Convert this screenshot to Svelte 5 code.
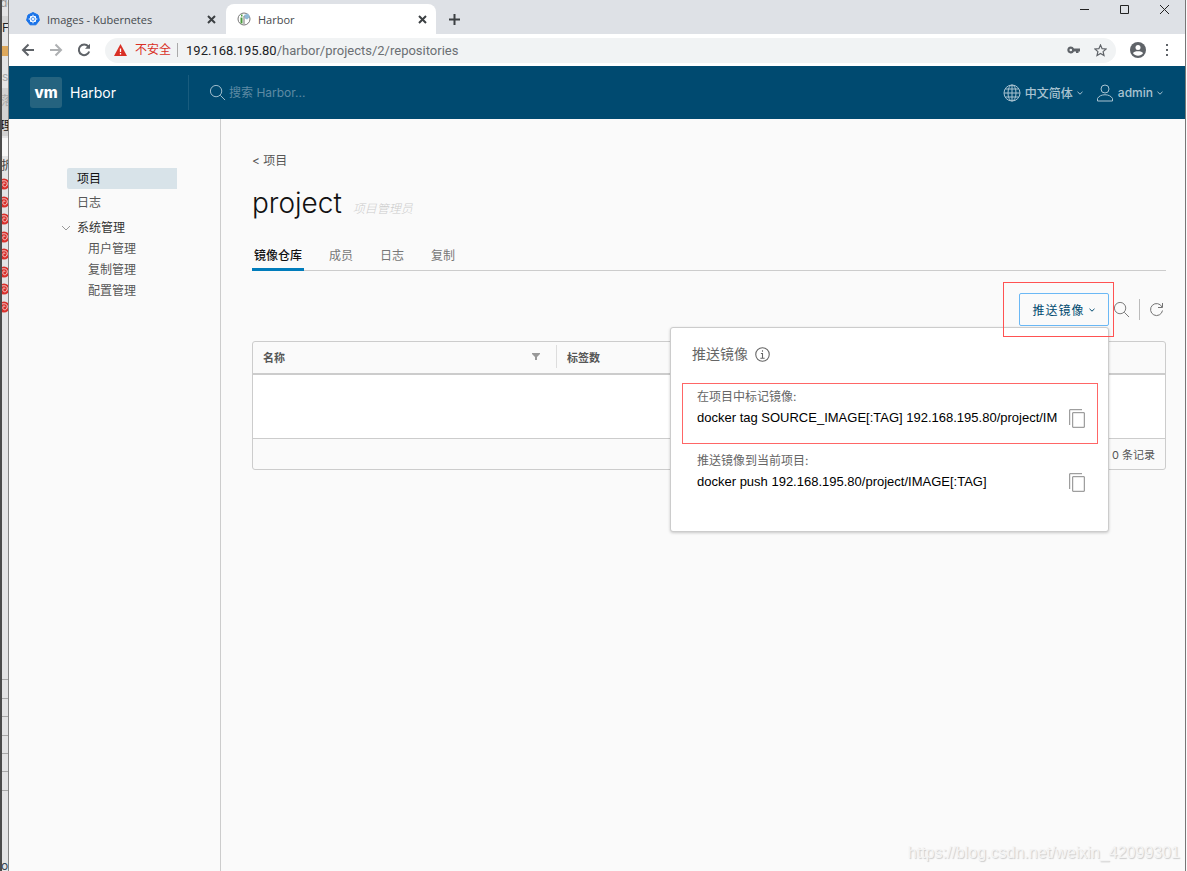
<script>
	let keyword = $state("");
	let showPush = $state(true);

	const registry = "192.168.195.80";
	const projectTabs = ["镜像仓库", "成员", "日志", "复制"];
	const systemLinks = ["用户管理", "复制管理", "配置管理"];
	const commands = [
		{
			id: "tag",
			label: "在项目中标记镜像:",
			text: `docker tag SOURCE_IMAGE[:TAG] ${registry}/project/IMAGE[:TAG]`,
			marked: true
		},
		{
			id: "push",
			label: "推送镜像到当前项目:",
			text: `docker push ${registry}/project/IMAGE[:TAG]`,
			marked: false
		}
	];
	const swirls = [184, 202, 219, 237, 254, 272, 289, 307];
	const rowLines = [679, 698, 716, 735, 753, 771, 790];

	function copy(text) {
		navigator.clipboard?.writeText(text);
	}
</script>

{#snippet caret()}
	<svg class="caret" width="8" height="8" viewBox="0 0 8 8"><path d="M1.5 2.8 4 5.2l2.5-2.4" /></svg>
{/snippet}

{#snippet search(size)}
	<svg class="line" width={size} height={size} viewBox="0 0 18 18"><circle cx="7.5" cy="7.5" r="6" /><path d="m12 12 5 5" /></svg>
{/snippet}

<div class="desktop">
	<!-- edge of the window behind the browser -->
	<svg class="behind" width="9" aria-hidden="true">
		<rect width="9" height="100%" fill="#e4e4e5" />
		<rect x="2" y="16" width="6" height="8" fill="#d3d3d3" />
		<rect x="2" y="46" width="6" height="10" fill="#dda85c" />
		<rect x="2" y="88" width="6" height="48" fill="#d2d2d2" />
		<rect x="2" y="138" width="6" height="18" fill="#f8f8f8" />
		<text x="0" y="7" fill="#999">de</text>
		<text x="2" y="32" fill="#222">F/</text>
		<text x="2" y="81" fill="#aaa">s</text>
		<text x="1" y="105" fill="#aaa">落</text>
		<text x="0" y="130" fill="#111">理</text>
		<text x="1" y="170" fill="#444">折</text>
		{#each swirls as y}
			<circle cx="4" cy={y} r="5.5" fill="#d9302b" />
			<path d="M2 {y - 3}c4-1 6 1 5 4s-5 2-4-1 2 0 2 0" fill="none" stroke="#f6d5d4" />
		{/each}
		{#each rowLines as y}
			<rect x="2" {y} width="6" height="1" fill="#a9a9a9" />
		{/each}
		<text x="1" y="870" fill="#345">of</text>
		<rect width="2" height="100%" fill="#4b4b4b" />
		<rect x="8" width="1" height="100%" fill="#858585" />
	</svg>

	<div class="window">
		<div class="tabstrip">
			<div class="tab">
				<svg width="14" height="14" viewBox="0 0 14 14">
					<path d="M7 .5 12 3l1.4 5.2-3.5 4.6H4.100L.6 8.200 2 3z" fill="#1a73e8" stroke="#1a73e8" stroke-linejoin="round" />
					<circle cx="7" cy="7" r="3" fill="none" stroke="#fff" />
					<path d="M7 2.500v9M2.500 7h9M4 4l6 6M10 4l-6 6" stroke="#fff" stroke-width=".7" />
				</svg>
				<span>Images - Kubernetes</span>
				<button aria-label="关闭标签页"><svg width="9" height="9" viewBox="0 0 9 9"><path d="m1 1 7 7m0-7-7 7" /></svg></button>
			</div>
			<div class="tab active">
				<svg width="14" height="14" viewBox="0 0 14 14">
					<circle cx="7" cy="7" r="6" fill="#fff" stroke="#777" />
					<path d="M3.500 5.500h2v6h-2zM4 2.500h1.500v2H4z" fill="#4b9a3e" />
					<path d="m7 3 4-1.500L13 5l-3 2.500-2-1z" fill="#8fb9d6" />
					<path d="M7 4v8" stroke="#777" />
				</svg>
				<span>Harbor</span>
				<button aria-label="关闭标签页"><svg width="9" height="9" viewBox="0 0 9 9"><path d="m1 1 7 7m0-7-7 7" /></svg></button>
			</div>
			<button class="newtab" aria-label="新标签页"><svg width="11" height="11" viewBox="0 0 11 11"><path d="M5.500 0v11M0 5.500h11" /></svg></button>
			<div class="controls">
				<button aria-label="最小化"><svg width="9" height="9" viewBox="0 0 9 9"><path d="M0 4.500h9" /></svg></button>
				<button aria-label="最大化"><svg width="9" height="9" viewBox="0 0 9 9"><path d="M.5.5h8v8h-8z" /></svg></button>
				<button aria-label="关闭"><svg width="9" height="9" viewBox="0 0 9 9"><path d="m0 0 9 9m0-9-9 9" /></svg></button>
			</div>
		</div>

		<div class="toolbar">
			<button aria-label="后退"><svg width="14" height="14" viewBox="0 0 14 14"><path d="M13 7H2m5.500-5.500L2 7l5.500 5.500" /></svg></button>
			<button class="off" aria-label="前进"><svg width="14" height="14" viewBox="0 0 14 14"><path d="M1 7h11M6.500 1.500 12 7l-5.500 5.500" /></svg></button>
			<button aria-label="重新加载"><svg width="14" height="14" viewBox="0 0 14 14"><path d="M11.300 3.500A5.300 5.300 0 1 0 12.200 8.500" /><path d="M13 .8v5H8z" fill="#5f6368" stroke="none" /></svg></button>
			<div class="address">
				<svg width="13" height="12" viewBox="0 0 13 12"><path d="M6.500 0 13 12H0z" fill="#d93025" /><path d="M6.500 4.500v3.500m0 1v1.500" stroke="#fff" stroke-width="1.300" /></svg>
				<span class="insecure">不安全</span>
				<span class="url">{registry}<i>/harbor/projects/2/repositories</i></span>
				<svg width="13" height="8" viewBox="0 0 13 8"><path d="M3.800.5a3.500 3.500 0 1 0 3.200 5h2V7h2.500V5.500H13v-3H7a3.500 3.500 0 0 0-3.200-2zm0 2.200a1.300 1.300 0 1 1 0 2.600 1.300 1.300 0 0 1 0-2.600z" fill="#5f6368" fill-rule="evenodd" /></svg>
				<svg class="star" width="13" height="13" viewBox="0 0 13 13"><path d="m6.500 1 1.600 3.700 4 .3-3 2.600.9 4-3.500-2.100L3 11.600l.9-4L.9 5l4-.3z" fill="none" stroke="#5f6368" stroke-width="1.200" /></svg>
			</div>
			<button aria-label="用户"><svg width="16" height="16" viewBox="0 0 16 16"><circle cx="8" cy="8" r="8" fill="#5f6368" stroke="none" /><circle cx="8" cy="5.500" r="2.500" fill="#fff" stroke="none" /><path d="M3 11.200c1-2.600 9-2.600 10 0-2 3.300-8 3.300-10 0z" fill="#fff" stroke="none" /></svg></button>
			<button class="more" aria-label="菜单"><svg width="4" height="14" viewBox="0 0 4 14"><path d="M1 1h2v2H1zM1 6h2v2H1zM1 11h2v2H1z" fill="#5f6368" stroke="none" /></svg></button>
		</div>

		<header>
			<a class="brand" href="#home"><span class="logo">vm</span>Harbor</a>
			<label class="find">
				{@render search(17)}
				<input bind:value={keyword} placeholder="搜索 Harbor..." aria-label="搜索 Harbor" />
			</label>
			<button class="menu">
				<svg class="line" width="18" height="18" viewBox="0 0 18 18"><circle cx="9" cy="9" r="8" /><ellipse cx="9" cy="9" rx="4" ry="8" /><path d="M9 1v16M1 9h16M2.300 5h13.400M2.300 13h13.400" /></svg>
				中文简体{@render caret()}
			</button>
			<button class="menu">
				<svg class="line" width="18" height="18" viewBox="0 0 18 18"><circle cx="9" cy="5" r="4" /><path d="M1.500 17v-2.500c2.500-5 12.500-5 15 0V17z" /></svg>
				admin{@render caret()}
			</button>
		</header>

		<div class="body">
			<nav class="side">
				<a class="current" href="#projects">项目</a>
				<a href="#logs">日志</a>
				<div class="group">
					<button><svg width="8" height="8" viewBox="0 0 8 8"><path d="m0 2 4 4 4-4" /></svg>系统管理</button>
					{#each systemLinks as name}
						<a href="#system">{name}</a>
					{/each}
				</div>
			</nav>

			<main>
				<a class="back" href="#projects">&lt; 项目</a>
				<h1>project <em>项目管理员</em></h1>
				<div class="tabs" role="tablist">
					{#each projectTabs as name, i}
						<button role="tab" aria-selected={i === 0} class:selected={i === 0}>{name}</button>
					{/each}
				</div>

				<div class="actions">
					<div class="dropdown">
						<button class="push" onclick={() => (showPush = !showPush)}>推送镜像{@render caret()}</button>
						{#if showPush}
							<section class="panel">
								<h2>
									推送镜像
									<svg class="line" width="15" height="15" viewBox="0 0 14 14"><circle cx="7" cy="7" r="6.300" /><path d="M7 3v1.500M5.500 6H7v4.500M5 10.500h4" /></svg>
								</h2>
								{#each commands as command (command.id)}
									<div class="command" class:framed={command.marked}>
										<label for={command.id}>{command.label}</label>
										<input id={command.id} readonly value={command.text} />
										<button aria-label="复制" onclick={() => copy(command.text)}>
											<svg width="16" height="19" viewBox="0 0 16 19"><path d="M.7 16V.7H13" /><path d="M3.700 3.700h11.600v14.600H3.700z" /></svg>
										</button>
									</div>
								{/each}
							</section>
						{/if}
						<div class="marker"></div>
					</div>
					<button class="icon" aria-label="搜索">{@render search(17)}</button>
					<button class="icon refresh" aria-label="刷新"><svg class="line" width="15" height="15" viewBox="0 0 15 15"><path d="M13 5A6 6 0 1 0 13.500 8.500M13.500 1v4.500H9" /></svg></button>
				</div>

				<table>
					<thead>
						<tr>
							<th class="name"><div>名称<svg width="8" height="7" viewBox="0 0 8 7"><path d="M0 0h8v1L5 4v3H3V4L0 1z" fill="#999" /></svg></div></th>
							<th><div>标签数</div></th>
						</tr>
					</thead>
					<tbody>
						<tr><td colspan="2"></td></tr>
					</tbody>
					<tfoot>
						<tr><td colspan="2">0 条记录</td></tr>
					</tfoot>
				</table>
			</main>
		</div>
	</div>
	<div class="watermark">https://blog.csdn.net/weixin_42099301</div>
</div>

<style>
	:global(body) {
		margin: 0;
		background: #fafafa;
	}
	.desktop {
		position: relative;
		display: flex;
		min-height: 100vh;
		overflow: hidden;
		font-family: Inter, "Noto Sans CJK SC", sans-serif;
		font-size: 12px;
		color: #565656;
	}
	.behind {
		flex: none;
		align-self: stretch;
		height: auto;
		font-size: 12px;
	}
	.window {
		flex: 1;
		min-width: 0;
		display: flex;
		flex-direction: column;
		border-right: 1px solid #777;
		margin-right: 1px;
		background: #fafafa;
	}
	button,
	input {
		font: inherit;
		color: inherit;
		border: 0;
		padding: 0;
		background: none;
	}
	button {
		display: flex;
		align-items: center;
		justify-content: center;
	}
	a {
		color: inherit;
		text-decoration: none;
	}
	svg {
		flex: none;
	}
	.line,
	.caret {
		fill: none;
		stroke: currentColor;
	}

	.tabstrip {
		display: flex;
		height: 34px;
		background: #dee1e6;
		font-family: "Open Sans", sans-serif;
		font-size: 11px;
		color: #45494d;
	}
	.tabstrip button svg {
		fill: none;
		stroke: #3c4043;
		stroke-width: 2;
	}
	.tab {
		display: flex;
		align-items: center;
		gap: 7px;
		box-sizing: border-box;
		width: 210px;
		margin: 4px 0 0 6px;
		padding: 0 9px 0 11px;
		border-radius: 8px 8px 0 0;
	}
	.tab span {
		flex: 1;
	}
	.tab.active {
		margin-left: 1px;
		background: #fff;
	}
	.newtab {
		margin: 4px 0 0 13px;
	}
	.controls {
		display: flex;
		gap: 31px;
		height: 19px;
		margin-left: auto;
		padding-right: 16px;
	}
	.controls button svg {
		stroke: #222;
		stroke-width: 1;
	}

	.toolbar {
		display: flex;
		align-items: center;
		gap: 14px;
		height: 32px;
		padding: 0 16px 0 12px;
		background: #fff;
		font-family: Roboto, "Noto Sans CJK SC", sans-serif;
	}
	.toolbar button svg {
		fill: none;
		stroke: #5f6368;
		stroke-width: 2;
	}
	.toolbar .off {
		opacity: 0.5;
	}
	.toolbar .more {
		margin-left: 5px;
	}
	.address {
		flex: 1;
		display: flex;
		align-items: center;
		gap: 8px;
		height: 25px;
		padding: 0 9px;
		border-radius: 13px;
		background: #f1f3f4;
	}
	.insecure {
		padding-right: 6px;
		border-right: 1px solid #aaa;
		line-height: 14px;
		color: #d93025;
	}
	.url {
		flex: 1;
		font-size: 13px;
		color: #202124;
	}
	.url i {
		font-style: normal;
		color: #6b6f73;
	}
	.star {
		margin-left: 6px;
	}

	header {
		display: flex;
		align-items: center;
		height: 53px;
		padding-right: 21px;
		background: #004a70;
		color: #a9c3d1;
	}
	.brand {
		display: flex;
		align-items: center;
		gap: 8px;
		box-sizing: border-box;
		width: 180px;
		height: 35px;
		padding-left: 21px;
		border-right: 1px solid #195c7e;
		font-size: 14px;
		color: #fff;
	}
	.logo {
		width: 32px;
		border-radius: 3px;
		background: #25637f;
		line-height: 31px;
		text-align: center;
		font-size: 15px;
		font-weight: 800;
	}
	.find {
		flex: 1;
		display: flex;
		align-items: center;
		gap: 3px;
		padding-left: 20px;
	}
	.find input {
		width: 160px;
	}
	.find input::placeholder {
		color: #5e8ba4;
		opacity: 1;
	}
	.menu {
		gap: 4px;
		margin-left: 12px;
		font-weight: 500;
	}
	.menu .caret {
		margin-left: -1px;
	}

	.body {
		flex: 1;
		display: flex;
	}
	.side {
		display: flex;
		flex-direction: column;
		gap: 3px;
		box-sizing: border-box;
		width: 212px;
		padding: 49px 43px 0 58px;
		border-right: 1px solid #ccc;
		line-height: 21px;
	}
	.side > a {
		padding-left: 10px;
	}
	.side .current {
		border-radius: 2px 0 0 2px;
		background: #d8e3e9;
		color: #111;
	}
	.group {
		display: flex;
		flex-direction: column;
		padding-top: 1px;
	}
	.group a {
		padding-left: 21px;
	}
	.group button {
		justify-content: flex-start;
		gap: 7px;
		margin-left: -5px;
		color: #333;
	}
	.group svg {
		fill: none;
		stroke: #999;
	}

	main {
		flex: 1;
		min-width: 0;
		padding: 32px 19px 40px 31px;
	}
	.back {
		display: block;
		line-height: 20px;
	}
	h1 {
		margin: 12px 0 0;
		line-height: 40px;
		font-size: 28px;
		font-weight: 300;
		color: #111;
	}
	em {
		margin-left: 3px;
		font-size: 12px;
		color: #ccc;
	}
	.tabs {
		display: flex;
		gap: 23px;
		height: 41px;
		border-bottom: 1px solid #ccc;
	}
	.tabs button {
		box-sizing: border-box;
		height: 42px;
		padding: 12px 2px 0;
		border-bottom: 3px solid transparent;
		color: #777;
	}
	.tabs .selected {
		border-bottom-color: #007cbb;
		color: #111;
		font-weight: 500;
	}

	.actions {
		display: flex;
		align-items: center;
		justify-content: flex-end;
		margin-top: 22px;
		color: #737373;
	}
	.dropdown {
		position: relative;
	}
	/* marker round the push button */
	.marker {
		position: absolute;
		z-index: 2;
		inset: -11px -5px -11px -16px;
		border: 1px solid #ff5252;
		pointer-events: none;
	}
	.push {
		gap: 3px;
		box-sizing: border-box;
		width: 90px;
		height: 33px;
		border: 1px solid #6bb8f5;
		border-radius: 2px;
		letter-spacing: 1px;
		color: #004a70;
	}
	.icon {
		padding-left: 4px;
	}
	.refresh {
		height: 21px;
		margin-left: 9px;
		padding: 0 2px 0 9px;
		border-left: 1px solid #bbb;
	}

	.panel {
		position: absolute;
		z-index: 1;
		top: 34px;
		right: 0;
		box-sizing: border-box;
		width: 439px;
		height: 205px;
		padding: 13px 10px 0 11px;
		border: 1px solid #ccc;
		border-radius: 3px;
		box-shadow: 0 1px 3px rgba(0, 0, 0, 0.2);
		background: #fff;
	}
	h2 {
		display: flex;
		align-items: center;
		gap: 7px;
		margin: 0 0 16px 10px;
		line-height: 26px;
		font-size: 14px;
		font-weight: 400;
		color: #666;
	}
	.command {
		display: grid;
		grid-template-columns: 1fr 16px;
		align-content: start;
		column-gap: 12px;
		box-sizing: border-box;
		height: 61px;
		margin-bottom: 3px;
		padding: 3px 12px 0 14px;
		border: 1px solid transparent;
	}
	.framed {
		border-color: #f66;
	}
	.command label {
		grid-column: span 2;
		line-height: 20px;
		color: #666;
	}
	.command input {
		min-width: 0;
		height: 20px;
		font-family: "Liberation Sans", sans-serif;
		font-size: 13px;
		color: #000;
	}
	.command button {
		height: 23px;
	}
	.command svg {
		fill: none;
		stroke: #888;
	}

	table {
		width: 100%;
		margin-top: 15px;
		table-layout: fixed;
		border: 1px solid #ccc;
		border-radius: 3px;
		border-collapse: separate;
		border-spacing: 0;
		background: #fafafa;
	}
	th {
		padding: 0;
		border-bottom: 2px solid #ccc;
		text-align: left;
		font-size: 11px;
		font-weight: 600;
	}
	th div {
		display: flex;
		align-items: center;
		justify-content: space-between;
		height: 23px;
		margin: 3px 0 5px;
		padding: 0 16px 0 10px;
	}
	.name {
		width: 304px;
	}
	.name div {
		border-right: 1px solid #ddd;
	}
	tbody td {
		height: 63px;
		padding: 0;
		background: #fff;
	}
	tfoot td {
		height: 30px;
		padding: 0 10px;
		border-top: 1px solid #ccc;
		text-align: right;
		font-size: 11px;
	}

	.watermark {
		position: absolute;
		right: 7px;
		bottom: 9px;
		font-family: "Liberation Sans", sans-serif;
		font-size: 16px;
		color: #f4f4f4;
		text-shadow: 1px 1px 1px #ccc;
	}
</style>
